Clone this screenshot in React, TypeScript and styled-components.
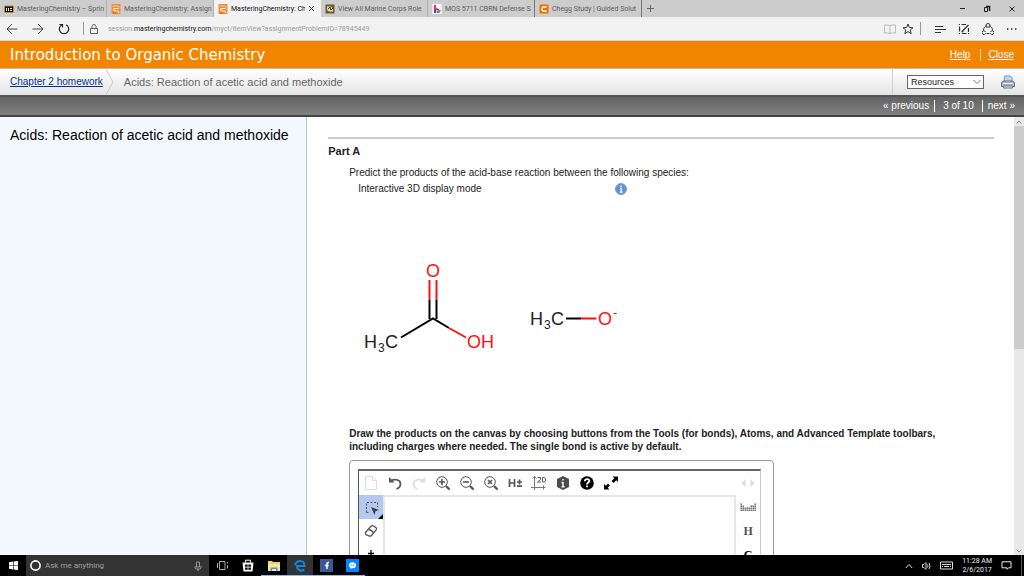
import React from "react";
import styled, { createGlobalStyle } from "styled-components";

const GlobalStyle = createGlobalStyle`
  * { box-sizing: border-box; }
  html, body { margin: 0; padding: 0; }
  body { font-family: "Liberation Sans", Arial, sans-serif; color: #222; background: #fff; }
  button { border: 0; padding: 0; margin: 0; background: none; color: inherit; font: inherit; }
  svg { display: block; flex: none; }
`;

const uiFont = `Roboto, "Open Sans", sans-serif`;

const Page = styled.div`
  display: flex;
  flex-direction: column;
  height: 100vh;
  overflow: hidden;
`;

/* ---------- browser tabs ---------- */
const TabStrip = styled.div`
  display: flex;
  flex: none;
  height: 17px;
  background: #ccc;
  font-family: ${uiFont};
`;
const Tab = styled.button<{ $active?: boolean; $edge?: boolean }>`
  display: flex;
  align-items: center;
  gap: 3px;
  flex: 0 1 107px;
  min-width: 0;
  padding-left: 4px;
  font-size: 7px;
  line-height: 16px;
  white-space: nowrap;
  color: ${(p) => (p.$active ? "#111" : "#5c5c5c")};
  background: ${(p) => (p.$active ? "#f2f2f2" : "transparent")};
  border-right: 1px solid ${(p) => (p.$active ? "#f2f2f2" : p.$edge ? "#777" : "#b0b0b0")};
`;
const TabText = styled.span`
  flex: 1;
  min-width: 0;
  overflow: hidden;
  text-align: left;
`;
const TabClose = styled.span`
  display: flex;
  padding-right: 5px;
`;
const NewTab = styled.button`
  display: flex;
  align-items: center;
  justify-content: center;
  width: 16px;
`;
const WindowButtons = styled.div`
  display: flex;
  align-items: center;
  gap: 16px;
  margin-left: auto;
  padding-right: 8px;
  button { display: flex; }
`;

/* ---------- address bar ---------- */
const NavBar = styled.div`
  display: flex;
  align-items: center;
  flex: none;
  height: 24px;
  padding: 0 6px;
  background: #f2f2f2;
  border-bottom: 1px solid #d5d9df;
`;
const NavGroup = styled.div<{ $gap: number }>`
  display: flex;
  align-items: center;
  gap: ${(p) => p.$gap}px;
  button { display: flex; }
`;
const NavDivider = styled.span<{ $left: number; $right: number }>`
  width: 1px;
  height: 13px;
  margin: 0 ${(p) => p.$right}px 0 ${(p) => p.$left}px;
  background: #999;
`;
const Address = styled.div`
  flex: 1;
  min-width: 0;
  padding-left: 9px;
  font-family: ${uiFont};
  font-size: 7px;
  line-height: 14px;
  white-space: nowrap;
  color: #999;
  outline: 0;
  b { font-weight: 400; color: #111; }
`;

/* ---------- course header ---------- */
const CourseBar = styled.header`
  display: flex;
  align-items: center;
  justify-content: space-between;
  flex: none;
  height: 28px;
  padding: 0 10px;
  background: #f28500;
  border-bottom: 1px solid #c9b89c;
  color: #fff;
`;
const CourseTitle = styled.h1`
  margin: 0;
  font: 400 15px/20px "DejaVu Sans", Verdana, sans-serif;
`;
const CourseLinks = styled.div`
  display: flex;
  align-items: center;
  font-size: 10px;
  line-height: 12px;
  a { color: #fff; }
  a + a { margin-left: 10px; padding-left: 7px; border-left: 1px solid #fbdcb0; }
`;
const CrumbBar = styled.div`
  display: flex;
  align-items: center;
  flex: none;
  height: 26px;
  background: linear-gradient(#fff, #e4e4e4);
`;
const CrumbLink = styled.a`
  padding-left: 10px;
  font-size: 10px;
  line-height: 14px;
  color: #039;
`;
const CrumbText = styled.span`
  flex: 1;
  padding-left: 10px;
  font-size: 11px;
  line-height: 14px;
  color: #666;
`;
const Resources = styled.div`
  display: flex;
  align-items: center;
  gap: 17px;
  height: 26px;
  padding: 0 9px 0 14px;
  border-left: 1px solid #d0d0d0;
  button { display: flex; }
`;
const SelectWrap = styled.label`
  display: grid;
  align-items: center;
  width: 77px;
  select, svg { grid-area: 1 / 1; }
  svg { justify-self: end; margin-right: 3px; pointer-events: none; }
`;
const Select = styled.select`
  appearance: none;
  width: 100%;
  height: 14px;
  padding: 0 3px;
  border: 1px solid #666;
  border-radius: 0;
  background: #fff;
  color: #222;
  font: 9px/12px "Liberation Sans", Arial, sans-serif;
`;
const Pager = styled.nav`
  display: flex;
  align-items: center;
  justify-content: flex-end;
  flex: none;
  height: 22px;
  padding-right: 9px;
  border-top: 2px solid #555;
  border-bottom: 2px solid #444;
  background: linear-gradient(#636363, #808080);
  color: #fff;
  font-size: 10px;
  line-height: 12px;
  a { color: #fff; text-decoration: none; }
  span {
    margin: 0 5px;
    padding: 0 8px;
    border: solid #fff;
    border-width: 0 1px;
  }
`;

/* ---------- content ---------- */
const Main = styled.main`
  display: flex;
  flex: 1;
  min-height: 0;
`;
const Sidebar = styled.aside`
  flex: none;
  width: 30%;
  padding: 10px;
  background: #f3f8ff;
  border-right: 1px solid #b4c7d9;
  h2 { margin: 0; font-size: 14px; font-weight: 400; line-height: 16px; color: #000; }
`;
const Content = styled.section`
  flex: 1;
  min-width: 0;
  overflow: hidden;
  padding: 20px 20px 0 21px;
  font-size: 10px;
  line-height: 16px;
`;
const PartTitle = styled.h3`
  margin: 0 0 6px;
  padding-top: 4px;
  border-top: 2px solid #ccc;
  font-size: 11px;
  line-height: 16px;
`;
const Problem = styled.div`
  padding-left: 21px;
  p { margin: 0; }
`;
const ModeRow = styled.div`
  display: flex;
  align-items: center;
  padding-left: 9px;
  span { width: 257px; }
  button { display: flex; }
`;
const Instruction = styled.p`
  max-width: 620px;
  font-weight: 700;
  line-height: 13px;
`;
const Frame = styled.div`
  width: 425px;
  margin-top: 7px;
  padding: 8px 12px 0 8px;
  border: 1px solid #999;
  border-radius: 4px;
`;
const Editor = styled.div`
  border-top: 2px solid #666;
  border-left: 1px solid #555;
  border-right: 1px solid #ccc;
`;
const ToolRow = styled.div`
  display: flex;
`;
const Tool = styled.button<{ $selected?: boolean; $end?: boolean }>`
  display: flex;
  align-items: center;
  justify-content: center;
  width: 24px;
  height: 24px;
  margin-left: ${(p) => (p.$end ? "auto" : "0")};
  background: ${(p) => (p.$selected ? "#b3c9ee" : "none")};
`;
const EditorBody = styled.div`
  display: flex;
  height: 240px;
`;
const ToolColumn = styled.div`
  display: flex;
  flex-direction: column;
  width: 24px;
`;
const Canvas = styled.div`
  flex: 1;
  border: 2px solid #e6e6e6;
  border-bottom: 0;
`;
const Atom = styled.span<{ $dark?: boolean }>`
  font: 700 12px/14px "Liberation Serif", "Times New Roman", serif;
  color: ${(p) => (p.$dark ? "#000" : "#555")};
`;
const ScrollBar = styled.div`
  display: flex;
  flex-direction: column;
  align-items: center;
  flex: none;
  width: 10px;
  background: #e8e8e8;
`;
const ScrollArrow = styled.button`
  display: flex;
  align-items: center;
  height: 9px;
`;
const ScrollTrack = styled.div`
  flex: 1;
  width: 100%;
`;
const ScrollThumb = styled.div`
  height: 53%;
  background: #cdcdcd;
`;

/* ---------- task bar ---------- */
const TaskBar = styled.footer`
  display: flex;
  flex: none;
  height: 21px;
  background: #000;
  color: #eee;
  font-family: ${uiFont};
`;
const TaskButton = styled.button<{ $running?: boolean; $active?: boolean }>`
  display: flex;
  align-items: center;
  justify-content: center;
  width: 26px;
  background: ${(p) => (p.$active ? "#333" : "none")};
  border-top: 1px solid transparent;
  border-bottom: 1px solid ${(p) => (p.$running ? "#83bdea" : "transparent")};
`;
const Search = styled.label`
  display: flex;
  align-items: center;
  gap: 4px;
  width: 183px;
  padding: 0 7px 0 4px;
  background: #333;
`;
const SearchInput = styled.input`
  flex: 1;
  min-width: 0;
  padding: 0;
  border: 0;
  outline: 0;
  background: none;
  color: #fff;
  font: 8px/14px ${uiFont};
  &::placeholder { color: #a0a0a0; opacity: 1; }
`;
const Tray = styled.div`
  display: flex;
  align-items: center;
  gap: 9px;
  margin-left: auto;
  padding-right: 2px;
  button { display: flex; }
`;
const Clock = styled.time`
  font-size: 7px;
  line-height: 9px;
  text-align: center;
  white-space: nowrap;
`;
const DesktopEdge = styled.span`
  width: 1px;
  height: 21px;
  background: #555;
`;

/* ---------- icons ---------- */
const MasteringIcon = () => (
  <svg width="10" height="10" viewBox="0 0 10 10">
    <rect x="0.500" width="9" height="10" rx="1" fill="#f08a35" />
    <path d="M1.500 2.500c2-1 4-1 7 .5" stroke="#ffd9b0" fill="none" />
    <path d="M8 4.500H4.500q-2 0-2 1.200t2 1.300H6q2 .2 1.500 2" stroke="#fff1e0" strokeWidth="1.200" fill="none" />
    <path d="M2 9h3" stroke="#c9641a" fill="none" />
  </svg>
);
const tabs = [
  {
    text: "MasteringChemistry – Sprin",
    icon: (
      <svg width="10" height="10" viewBox="0 0 10 10">
        <rect x="0.500" y="2" width="9" height="6.500" rx="1" fill="#111" stroke="#c08a20" />
        <path d="M2.500 4v3M4.500 4v3M6 4.500h2M6 6.500h2" stroke="#fff" />
      </svg>
    ),
  },
  { text: "MasteringChemistry: Assign", icon: <MasteringIcon /> },
  { text: "MasteringChemistry: Ch", icon: <MasteringIcon />, active: true },
  {
    text: "View All Marine Corps Role",
    icon: (
      <svg width="10" height="10" viewBox="0 0 10 10">
        <rect x="0.500" y="0.500" width="9" height="9" fill="#6b5a34" />
        <path d="M2 2.500h4l2 2v3H4L2 6z" fill="#e3d6ad" />
        <path d="M3 5l2-2 1 3 2-2" stroke="#3b321c" fill="none" />
      </svg>
    ),
  },
  {
    text: "MOS 5711 CBRN Defense S",
    edge: true,
    icon: (
      <svg width="10" height="10" viewBox="0 0 10 10">
        <rect x="0.500" y="0" width="9" height="10" fill="#fff" />
        <path d="M3 1v4.500" stroke="#f5333f" strokeWidth="2" />
        <path d="M3 5v4" stroke="#8a2be2" strokeWidth="2" />
        <path d="M4 5l3 1" stroke="#e0218a" strokeWidth="2" />
        <path d="M4.500 8h2.500q1-.8.800-2" stroke="#31b44b" strokeWidth="1.800" fill="none" />
      </svg>
    ),
  },
  {
    text: "Chegg Study | Guided Solut",
    edge: true,
    icon: (
      <svg width="10" height="10" viewBox="0 0 10 10">
        <rect x="0.500" y="0.500" width="9" height="9" rx="1" fill="#eb7100" />
        <path d="M7 3.500V3H4.200L3 4v2l1.200 1H7v-.6" stroke="#fff" strokeWidth="1.400" fill="none" />
      </svg>
    ),
  },
];

const Stroke = ({ w = 12, h = w, d, color = "#444", sw = 1 }: { w?: number; h?: number; d: string; color?: string; sw?: number }) => (
  <svg width={w} height={h} viewBox={`0 0 ${w} ${h}`} fill="none" stroke={color} strokeWidth={sw}>
    <path d={d} />
  </svg>
);

const Magnifier = ({ d }: { d: string }) => (
  <svg width="16" height="16" viewBox="0 0 16 16" fill="none" stroke="#555">
    <circle cx="7" cy="7" r="5.300" />
    <path d={d} strokeWidth="1.600" />
    <path d="M11 11l3.500 3.500" strokeWidth="2.400" />
  </svg>
);

const topTools = [
  {
    label: "New",
    icon: <Stroke w={14} d="M1.500 .5h7l4 4v9h-11zM8.500 .5v4h4" color="#ddd" />,
  },
  {
    label: "Undo",
    icon: (
      <svg width="14" height="14" viewBox="0 0 14 14">
        <path d="M3 4.500C8 2.500 12.500 4 12.500 8c0 2.500-1.500 4-4 5" stroke="#555" strokeWidth="1.700" fill="none" />
        <path d="M1 1v5.500h5.500z" fill="#555" />
      </svg>
    ),
  },
  {
    label: "Redo",
    icon: (
      <svg width="14" height="14" viewBox="0 0 14 14">
        <path d="M11 4.500C6 2.500 1.500 4 1.500 8c0 2.500 1.500 4 4 5" stroke="#ddd" strokeWidth="1.700" fill="none" />
        <path d="M13 1v5.500H7.500z" fill="#ddd" />
      </svg>
    ),
  },
  { label: "Zoom in", icon: <Magnifier d="M4 7h6M7 4v6" /> },
  { label: "Zoom out", icon: <Magnifier d="M4 7h6" /> },
  { label: "Zoom to fit", icon: <Magnifier d="M5 5l4 4M9 5l-4 4" /> },
  {
    label: "Hydrogens",
    icon: (
      <Stroke w={14} h={10} d="M1.500 1v8M6.500 1v8M1.500 5h5M9 4h5M11.500 1.500v5M9 8.200h5" color="#555" sw={1.7} />
    ),
  },
  {
    label: "Clean 2D",
    icon: (
      <svg width="16" height="16" viewBox="0 0 16 16" fill="none" stroke="#777">
        <path d="M3.500 1v14M1.500 3.500l2-2 2 2M0 12.500h14.500M12.500 10.500v4" />
        <path d="M6.500 2.500h3v2l-3 2.500h3.500M11.500 2.500v4.500h1.500l1.500-1v-2.500l-1.500-1z" stroke="#555" />
      </svg>
    ),
  },
  {
    label: "Attributes",
    icon: (
      <svg width="14" height="14" viewBox="0 0 14 14">
        <path d="M7 0l6 3v8l-6 3-6-3V3z" fill="#4c4c4c" />
        <path d="M7 3v1.600M7 6v5M5.500 6.500H7M5.500 10.700h3" stroke="#fff" strokeWidth="1.400" />
      </svg>
    ),
  },
  {
    label: "Help",
    icon: (
      <svg width="14" height="14" viewBox="0 0 14 14">
        <circle cx="7" cy="7" r="6.800" fill="#000" />
        <path d="M4.800 5.300c0-3 4.500-2.600 4.500-.3C9.300 6.600 7 6.600 7 8.500M7 9.500v1.800" stroke="#fff" strokeWidth="1.800" fill="none" />
      </svg>
    ),
  },
  {
    label: "Full screen",
    icon: (
      <svg width="14" height="14" viewBox="0 0 14 14">
        <path d="M8.500 .5H14V6l-1.800-1.800-2.700 2.700-1.900-1.900 2.700-2.700zM5.500 13.500H0V8l1.800 1.800 2.200-2.200 1.900 1.900-2.200 2.200z" fill="#000" />
      </svg>
    ),
  },
];

const PeriodicTable = () => {
  const rows = ["1......1", "11...111", "11111111", "11111111"];
  return (
    <svg width="17" height="9" viewBox="0 0 17 9" fill="#555">
      {rows.flatMap((r, y) =>
        [...r].map((c, x) => (c === "1" ? <rect key={`${x}-${y}`} x={x * 2 + 0.5} y={y * 2 + 0.5} width="1.400" height="1.400" /> : null))
      )}
    </svg>
  );
};

const Molecules = () => (
  <svg
    width="300"
    height="230"
    viewBox="349 197 300 230"
    role="img"
    aria-label="Acetic acid and methoxide"
    fontFamily="'Liberation Sans', Arial, sans-serif"
    fontSize="18"
    fill="#222"
  >
    <g strokeWidth="2" stroke="#000" fill="none">
      <path d="M401 337.500L433 318.500L449 328M429.500 299.500V319M436.500 299.500V319M566 318.500h15" />
      <path d="M429.500 280v19.500M436.500 280v19.500M449 328l17 9.500M581 318.500h15.500" stroke="#f11" />
    </g>
    <text x="364" y="348">H</text>
    <text x="378" y="352" fontSize="12">3</text>
    <text x="385" y="348">C</text>
    <text x="426" y="277" fill="#f11">O</text>
    <text x="467" y="348" fill="#f11">OH</text>
    <text x="530" y="325">H</text>
    <text x="544" y="329" fontSize="12">3</text>
    <text x="551" y="325">C</text>
    <text x="598" y="325" fill="#f11">O</text>
    <text x="613" y="317" fill="#f11" fontSize="13">-</text>
  </svg>
);

export default function App() {
  return (
    <Page>
      <GlobalStyle />
      <TabStrip>
        {tabs.map((t, i) => (
          <Tab key={i} $active={t.active} $edge={t.edge}>
            {t.icon}
            <TabText>{t.text}</TabText>
            {t.active && (
              <TabClose>
                <Stroke w={7} d="M1 1l5 5M6 1l-5 5" />
              </TabClose>
            )}
          </Tab>
        ))}
        <NewTab aria-label="New tab">
          <Stroke w={7} d="M3.500 0v7M0 3.500h7" color="#666" />
        </NewTab>
        <WindowButtons>
          <button aria-label="Minimize"><Stroke w={7} d="M1 3.500h5" color="#222" /></button>
          <button aria-label="Restore">
            <svg width="10" height="8" viewBox="0 0 10 8"><path d="M2.500 2.500h3v4h-3z" stroke="#222" fill="none" /><path d="M4 1.500h3.500V6" stroke="#222" strokeWidth="1.600" fill="none" /></svg>
          </button>
          <button aria-label="Close window"><Stroke w={8} d="M1.500 1.500l5 5M6.500 1.500l-5 5" color="#222" /></button>
        </WindowButtons>
      </TabStrip>

      <NavBar>
        <NavGroup $gap={14}>
          <button aria-label="Back"><Stroke w={12} d="M11.500 6H1M6 1L1 6l5 5" /></button>
          <button aria-label="Forward"><Stroke w={12} d="M.5 6H11M6 1l5 5-5 5" /></button>
          <button aria-label="Refresh"><Stroke w={12} d="M4 1.800a4.700 4.700 0 1 0 4 0M1.500 1.500h3v3" color="#222" sw={1.2} /></button>
        </NavGroup>
        <NavDivider $left={13} $right={5} />
        <Stroke w={10} h={12} d="M1.500 5.500h7v5h-7zM3 5.500V3.500a2 2 0 0 1 4 0v2" color="#666" />
        <Address role="textbox" aria-label="Address" contentEditable suppressContentEditableWarning>
          session.<b>masteringchemistry.com</b>/myct/itemView?assignmentProblemID=78945449
        </Address>
        <NavGroup $gap={6}>
          <button aria-label="Reading view"><Stroke w={12} d="M.5 2h4.500l1 1 1-1h4.500v8H7l-1 1-1-1H.5zM6 3v8" color="#bbb" /></button>
          <button aria-label="Favorite"><Stroke w={12} d="M6 1l1.400 3.500 3.600.2-2.800 2.300 1 3.700L6 8.600l-3.200 2.100 1-3.700L1 4.700l3.600-.2z" color="#333" /></button>
        </NavGroup>
        <NavDivider $left={6} $right={14} />
        <NavGroup $gap={12}>
          <button aria-label="Hub"><Stroke w={11} h={12} d="M0 3.500h8M0 6.500h11M0 9.500h6" color="#333" /></button>
          <button aria-label="Web note"><Stroke w={12} d="M1.500 3.500v5M3.500 1.500H8M4 10.500h4.500M10.500 5v4M4 8.500l6.500-6.500M3.500 9l2-.5M.8 1.500H2M.8 10.500H2M10 10.500h1.200" color="#333" sw={1.2} /></button>
          <button aria-label="Share"><Stroke w={12} d="M4 2.500a2 2 0 0 1 4 0M8.500 3.500c1.500 1 2 2 2 4M1.500 7.500c0-2 .5-3 2-4M4 2v2h4V2M.8 8a2 2 0 1 0 3 2.500M11.200 8a2 2 0 1 1-3 2.500M4.500 10.500h3M1 7.500l2.500 1M11 7.500l-2.500 1" color="#333" /></button>
          <button aria-label="More"><Stroke w={12} d="M1 6h1.400M5 6h1.400M9 6h1.400" color="#222" sw={1.4} /></button>
        </NavGroup>
      </NavBar>

      <CourseBar>
        <CourseTitle>Introduction to Organic Chemistry</CourseTitle>
        <CourseLinks>
          <a href="#help">Help</a>
          <a href="#close">Close</a>
        </CourseLinks>
      </CourseBar>

      <CrumbBar>
        <CrumbLink href="#chapter">Chapter 2 homework</CrumbLink>
        <svg width="11" height="26" viewBox="0 0 11 26">
          <path d="M3 0l7 13-7 13" stroke="#ccc" fill="none" />
        </svg>
        <CrumbText>Acids: Reaction of acetic acid and methoxide</CrumbText>
        <Resources>
          <SelectWrap>
            <Select aria-label="Resources">
              <option>Resources</option>
            </Select>
            <Stroke w={8} h={6} d="M.5 1L4 4.500 7.500 1" color="#777" />
          </SelectWrap>
          <button aria-label="Print">
            <svg width="14" height="14" viewBox="0 0 14 14">
              <path d="M3.500 1h6l1.500 2v4h-8z" fill="#b9d7ef" stroke="#7d9fbd" />
              <path d="M2 6h10l1.500 2v3.500H.5V8z" fill="#a9b4c2" stroke="#6b7685" />
              <path d="M2 8.500h10" stroke="#e6ebf0" />
              <path d="M2.500 11h9v2h-9z" fill="#e9eef2" stroke="#6b7685" />
            </svg>
          </button>
        </Resources>
      </CrumbBar>

      <Pager>
        <a href="#previous">« previous</a>
        <span>3 of 10</span>
        <a href="#next">next »</a>
      </Pager>

      <Main>
        <Sidebar>
          <h2>Acids: Reaction of acetic acid and methoxide</h2>
        </Sidebar>
        <Content>
          <PartTitle>Part A</PartTitle>
          <Problem>
            <p>Predict the products of the acid-base reaction between the following species:</p>
            <ModeRow>
              <span>Interactive 3D display mode</span>
              <button aria-label="About this mode">
                <svg width="12" height="12" viewBox="0 0 12 12">
                  <circle cx="6" cy="6" r="5.500" fill="#5f93cf" stroke="#7f9fc4" />
                  <path d="M6 2.500v1.400M5 5.300h1.200V9M4.800 9.200h2.800" stroke="#fff" strokeWidth="1.300" fill="none" />
                </svg>
              </button>
            </ModeRow>
            <Molecules />
            <Instruction>
              Draw the products on the canvas by choosing buttons from the Tools (for bonds), Atoms, and Advanced Template
              toolbars, including charges where needed. The single bond is active by default.
            </Instruction>
            <Frame>
              <Editor>
                <ToolRow>
                  {topTools.map((t) => (
                    <Tool key={t.label} aria-label={t.label}>{t.icon}</Tool>
                  ))}
                  <Tool $end aria-label="More templates">
                    <svg width="14" height="8" viewBox="0 0 14 8" fill="#ddd"><path d="M4.500 0v8L.5 4zM9.500 0v8l4-4z" /></svg>
                  </Tool>
                </ToolRow>
                <EditorBody>
                  <ToolColumn>
                    <Tool $selected aria-label="Select">
                      <svg width="24" height="24" viewBox="0 0 24 24">
                        <path d="M7.500 17.500V7.500H18.500V12M7.500 17.500H11" stroke="#555" strokeDasharray="2 1.500" fill="none" />
                        <path d="M12 12l8 3-3.500 1.200L15.500 20z" fill="#444" />
                        <path d="M24 19v5h-5z" fill="#000" />
                      </svg>
                    </Tool>
                    <Tool aria-label="Erase">
                      <svg width="14" height="14" viewBox="0 0 14 14" fill="none" stroke="#555" strokeWidth="1.300">
                        <path d="M1.500 8.500L7 2.300q1-1 2-.5l3 1.800q1 1 .3 2L7.500 11.500q-.8 1-2 .6l-3.500-1.500q-1-1-.5-2.100z" />
                        <path d="M4.500 5.500c2.500.5 4.500 2 5 3.700" />
                      </svg>
                    </Tool>
                    <Tool aria-label="Increase charge">
                      <Stroke w={10} d="M5 0v10M2 3.500h6" color="#000" sw={1.3} />
                    </Tool>
                  </ToolColumn>
                  <Canvas />
                  <ToolColumn>
                    <Tool aria-label="Periodic table"><PeriodicTable /></Tool>
                    <Tool><Atom>H</Atom></Tool>
                    <Tool><Atom $dark>C</Atom></Tool>
                  </ToolColumn>
                </EditorBody>
              </Editor>
            </Frame>
          </Problem>
        </Content>
        <ScrollBar>
          <ScrollArrow aria-label="Scroll up"><Stroke w={6} h={4} d="M.5 3.500L3 1l2.500 2.500" color="#888" /></ScrollArrow>
          <ScrollTrack><ScrollThumb /></ScrollTrack>
          <ScrollArrow aria-label="Scroll down"><Stroke w={6} h={4} d="M.5 .5L3 3 5.500 .5" color="#888" /></ScrollArrow>
        </ScrollBar>
      </Main>

      <TaskBar>
        <TaskButton aria-label="Start">
          <svg width="9" height="9" viewBox="0 0 9 9" fill="#fff"><path d="M0 1.200L4 .6v3.700H0zM4.600.5L9 0v4.300H4.600zM0 4.800h4v3.600L0 7.800zM4.600 4.800H9V9l-4.400-.6z" /></svg>
        </TaskButton>
        <Search>
          <svg width="11" height="11" viewBox="0 0 11 11"><circle cx="5.500" cy="5.500" r="4.600" stroke="#fff" strokeWidth="1.600" fill="none" /></svg>
          <SearchInput placeholder="Ask me anything" aria-label="Search" />
          <Stroke w={8} h={10} d="M2.500 1h3v5h-3zM1 5v2l1.500 1h3L7 7V5M4 8v2" color="#999" />
        </Search>
        <TaskButton aria-label="Task view">
          <Stroke w={11} h={9} d="M2.500 .5h5.500v8H2.500zM.5 2v5M10.500 1v1.500M10.500 4v3.500" color="#aaa" />
        </TaskButton>
        <TaskButton aria-label="Store">
          <svg width="12" height="13" viewBox="0 0 12 13">
            <path d="M3.500 3.500V1.200h5v2.300" stroke="#fff" fill="none" />
            <path d="M.5 3.500h11l-1 9h-9z" fill="#fff" />
            <path d="M3 5.500h2.700v2.300H3zM6.300 5.500H9v2.300H6.300zM3 8.400h2.700v2.300H3zM6.300 8.400H9v2.300H6.300z" fill="#111" />
          </svg>
        </TaskButton>
        <TaskButton $running aria-label="File Explorer">
          <svg width="12" height="10" viewBox="0 0 12 10">
            <path d="M0 0h4l1 1h7v9H0z" fill="#f6d067" />
            <path d="M0 3h12v7H0z" fill="#fce596" />
            <path d="M2.500 10V6.500h7V10H8V8H4v2z" fill="#3a9be0" />
          </svg>
        </TaskButton>
        <TaskButton $running $active aria-label="Edge">
          <svg width="12" height="12" viewBox="0 0 12 12">
            <path d="M1 5.300C2 1.800 4 1 6.200 1 9 1 10.500 3.200 10.500 6H3.500" stroke="#1683d8" strokeWidth="2" fill="none" />
            <path d="M3.300 5c-1 4.500 3.200 7 7 4.800" stroke="#1683d8" strokeWidth="2.200" fill="none" />
          </svg>
        </TaskButton>
        <TaskButton $running aria-label="Facebook">
          <svg width="13" height="13" viewBox="0 0 13 13">
            <rect width="13" height="13" fill="#3b5998" />
            <path d="M9 3.500H8q-1 0-1 1V10M5 6.500h3.700" stroke="#fff" strokeWidth="1.500" fill="none" />
          </svg>
        </TaskButton>
        <TaskButton $running aria-label="Messenger">
          <svg width="13" height="13" viewBox="0 0 13 13">
            <rect width="13" height="13" fill="#0084ff" />
            <ellipse cx="6.500" cy="6.200" rx="3.500" ry="3" fill="#fff" />
            <path d="M4.500 8v2l2-1.200z" fill="#fff" />
            <path d="M4.500 7l1.500-1.300 1 1L8.500 5.500" stroke="#0084ff" strokeWidth=".8" fill="none" />
          </svg>
        </TaskButton>
        <Tray>
          <button aria-label="Hidden icons"><Stroke w={8} h={6} d="M.8 5L4 1.500 7.200 5" color="#ddd" /></button>
          <button aria-label="Volume"><Stroke w={9} h={8} d="M.5 2.500h1.500l2-2v7l-2-2H.5zM5.500 2.500q1 1.500 0 3M7 1q2 3 0 6" color="#ccc" /></button>
          <button aria-label="Keyboard"><Stroke w={13} h={9} d="M.5 1h12v7H.5zM2 3.500h9M2 5.500h1M4 5.500h5M10 5.500h1" color="#ddd" /></button>
          <Clock>11:28 AM<br />2/6/2017</Clock>
          <button aria-label="Notifications"><Stroke w={11} h={9} d="M1 .8h9v6H7.500L6 8.300V6.800H1z" color="#eee" /></button>
          <DesktopEdge />
        </Tray>
      </TaskBar>
    </Page>
  );
}
